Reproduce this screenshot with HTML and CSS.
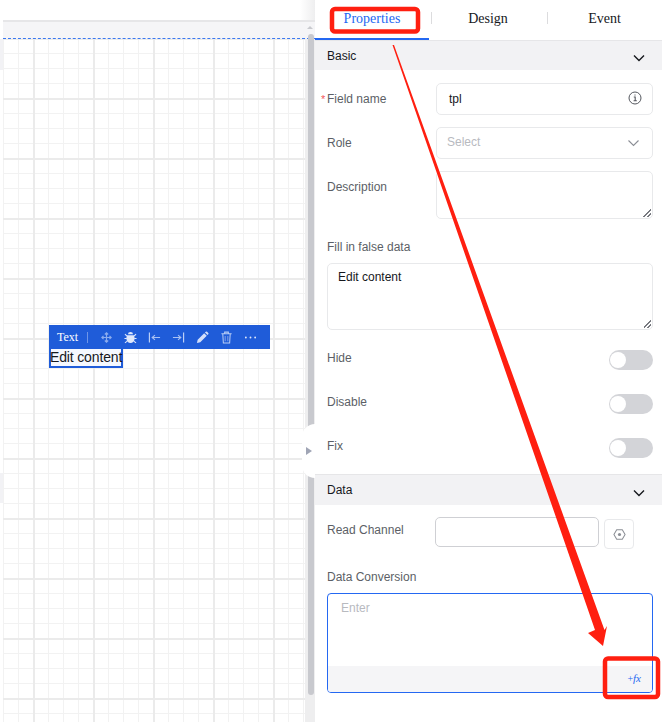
FILE: index.html
```html
<!DOCTYPE html>
<html lang="en">
<head>
<meta charset="utf-8">
<title>Form designer</title>
<link rel="stylesheet" href="styles.css">
</head>
<body>
<div class="app">
  <section class="stage">
    <div class="stage-top"></div>
    <div class="ruler"></div>
    <div class="board">
      <div class="edge"><div class="edge-a"></div><div class="edge-b"></div></div>
      <div class="grid">
        <div class="toolbar">
          <span class="tool-name">Text</span>
          <span class="tool-sep"></span>
          <svg class="ti" viewBox="0 0 14 14"><path d="M7 2v10M2 7h10M5.200 3.800 7 2l1.800 1.800M5.200 10.200 7 12l1.800-1.800M3.800 5.200 2 7l1.800 1.800M10.200 5.200 12 7l-1.800 1.800" fill="none" stroke="#8cacee" stroke-width="1.300"/></svg>
          <svg class="ti" viewBox="0 0 14 14"><path d="M4.300 3.600a2.700 2.400 0 0 1 5.400 0zM3.600 4.600h6.800c.8 1 1 2 1 3.400 0 3-2 5-4.400 5s-4.400-2-4.400-5c0-1.400.2-2.400 1-3.400z" fill="#dfe8fb"/><path d="M1 3.500 3.500 5.500M13 3.500l-2.500 2M.5 8h2.500M11 8h2.500M1 12.800l2.500-2M13 12.800l-2.500-2" stroke="#dfe8fb" stroke-width="1.100"/></svg>
          <svg class="ti" viewBox="0 0 14 14"><path d="M1.500 1.500v11" fill="none" stroke="#c5d5f7" stroke-width="1.200"/><path d="M13 7H4.500M7.500 4.500 4.500 7l3 2.500" fill="none" stroke="#a9c1f3" stroke-width="1.200"/></svg>
          <svg class="ti" viewBox="0 0 14 14"><path d="M12.500 1.500v11" fill="none" stroke="#c5d5f7" stroke-width="1.200"/><path d="M1 7h8.500M6.500 4.500l3 2.500-3 2.500" fill="none" stroke="#a9c1f3" stroke-width="1.200"/></svg>
          <svg class="ti" viewBox="0 0 14 14"><path d="M1 13l.8-3.600 7-7 2.800 2.800-7 7zM9.600 1.600l.9-.8a1 1 0 0 1 1.400 0l1.300 1.300a1 1 0 0 1 0 1.400l-.8.900z" fill="#d3dffa"/></svg>
          <svg class="ti" viewBox="0 0 14 14"><path d="M1.500 3h11M5 3V1.200h4V3M3 3l.6 10h6.800L11 3" fill="none" stroke="#b9cdf5" stroke-width="1.100"/><path d="M5.600 5.500v5.500M8.400 5.500v5.500" fill="none" stroke="#7f9fe8" stroke-width="1.100"/></svg>
          <svg class="ti" viewBox="0 0 14 14"><circle cx="2" cy="7" r="1" fill="#dfe8fb"/><circle cx="7" cy="7" r="1" fill="#dfe8fb"/><circle cx="12" cy="7" r="1" fill="#dfe8fb"/></svg>
        </div>
        <div class="selected">Edit content</div>
      </div>
      <div class="track"><div class="thumb"></div></div>
    </div>
    <div class="track-arrow"></div>
    <div class="handle"><span class="handle-arrow"></span></div>
  </section>

  <aside class="panel">
    <nav class="tabs">
      <div class="tab tab-active">Properties</div>
      <div class="tab tab-design">Design</div>
      <div class="tab tab-event">Event</div>
    </nav>

    <header class="section-head">
      <span>Basic</span>
      <svg class="chev" viewBox="0 0 12 8"><path d="M1 1.500 6 6.500l5-5" fill="none" stroke="#16181d" stroke-width="1.400"/></svg>
    </header>
    <div class="section-body">
      <div class="row">
        <label class="label"><span class="req">*</span>Field name</label>
        <div class="input input-value"><span>tpl</span>
          <svg class="info" viewBox="0 0 14 14"><circle cx="7" cy="7" r="6" fill="none" stroke="#55585f" stroke-width="1"/><path d="M5.800 6h1.400v3.800M5.600 9.800h3.200M7 3.400v1.200" fill="none" stroke="#55585f" stroke-width="1.100"/></svg>
        </div>
      </div>
      <div class="row">
        <label class="label">Role</label>
        <div class="input input-select"><span class="placeholder">Select</span>
          <svg class="select-chev" viewBox="0 0 12 8"><path d="M1 1.500 6 6.500l5-5" fill="none" stroke="#8b8e95" stroke-width="1.100"/></svg>
        </div>
      </div>
      <div class="row">
        <label class="label">Description</label>
        <div class="area area-short"><span class="grip"></span></div>
      </div>
      <div class="stack">
        <label class="label-top">Fill in false data</label>
        <div class="area area-tall"><span class="area-text">Edit content</span><span class="grip"></span></div>
      </div>
      <div class="switches">
        <div class="switch-row"><span class="label-sw">Hide</span><span class="switch"></span></div>
        <div class="switch-row"><span class="label-sw">Disable</span><span class="switch"></span></div>
        <div class="switch-row"><span class="label-sw">Fix</span><span class="switch"></span></div>
      </div>
    </div>

    <header class="section-head section-data">
      <span>Data</span>
      <svg class="chev" viewBox="0 0 12 8"><path d="M1 1.500 6 6.500l5-5" fill="none" stroke="#16181d" stroke-width="1.400"/></svg>
    </header>
    <div class="data-body">
      <div class="channel">
        <label class="label label-channel">Read Channel</label>
        <div class="channel-input"></div>
        <div class="channel-btn">
          <svg class="hex" viewBox="0 0 14 14"><path d="M4 1.800h6L13 7l-3 5.200H4L1 7z" fill="none" stroke="#8b8e95" stroke-width="1.100"/><circle cx="7" cy="7" r="1.700" fill="#8b8e95"/></svg>
        </div>
      </div>
      <label class="label-top label-conv">Data Conversion</label>
      <div class="formula">
        <div class="formula-text">Enter</div>
        <div class="formula-foot"><span class="fx">+<i>fx</i></span></div>
      </div>
    </div>
  </aside>

  <svg class="markup" viewBox="0 0 662 722" aria-hidden="true">
    <rect x="332" y="9" width="86" height="22.500" rx="3" fill="none" stroke="#ff1f10" stroke-width="4.500"/>
    <rect x="605" y="658.500" width="53" height="38.500" rx="3" fill="none" stroke="#ff1f10" stroke-width="4.500"/>
    <path d="M392.500 45 394 45 604.500 630 607 626 603 646 588 633 595 630Z" fill="#ff1f10"/>
  </svg>
</div>
</body>
</html>
```

FILE: styles.css
```css
* { box-sizing: border-box; }
html, body { margin: 0; padding: 0; background: #fff; }
body { width: 662px; height: 722px; overflow: hidden; font-family: "Liberation Sans", Arial, sans-serif; font-size: 12px; }
.app { position: relative; display: flex; width: 662px; height: 722px; overflow: hidden; }

/* canvas side */
.stage { position: relative; display: flex; flex-direction: column; width: 315px; height: 722px; flex: none; }
.stage-top { height: 20px; background: linear-gradient(90deg, #fff 300px, #eeeeef 315px); flex: none; }
.ruler { height: 19px; margin-left: 3px; flex: none; background: #f5f5f7; border-top: 2px solid #e6e6e8; border-bottom: 1px dashed #3b78f0; }
.board { display: flex; flex: 1; min-height: 0; }
.edge { width: 3px; flex: none; }
.edge-a { height: 31px; background: #f2f2f5; }
.edge-b { height: 30px; margin-top: 403px; background: #f2f2f5; }
.grid {
  position: relative;
  width: 302px;
  flex: none;
  background-color: #fff;
  background-image:
    linear-gradient(90deg, #ebebeb 2px, transparent 2px),
    linear-gradient(180deg, #ebebeb 2px, transparent 2px),
    linear-gradient(90deg, #f2f2f2 1px, transparent 1px),
    linear-gradient(180deg, #f2f2f2 1px, transparent 1px);
  background-size: 60px 60px, 60px 60px, 15px 15px, 15px 15px;
  background-position: 30px 0, 0 -1px, 0 0, 0 -1px;
}
.track { position: relative; flex: 1; background: #eeeeef; }
.thumb { position: absolute; left: 3px; top: -5px; width: 6px; height: 661px; border-radius: 3px; background: #c8c9ce; }
.track-arrow { position: absolute; left: 307px; top: 26px; width: 0; height: 0; border-left: 3px solid transparent; border-right: 3px solid transparent; border-bottom: 3px solid #c8c9ce; }

.toolbar { position: absolute; left: 46px; top: 286px; display: flex; align-items: center; width: 221px; height: 24px; padding-left: 8px; background: #1f5cd9; }
.tool-name { width: 22px; font-family: "Liberation Serif", serif; font-size: 12px; color: #fff; white-space: nowrap; }
.tool-sep { width: 1px; height: 11px; margin: 0 12px 0 8px; background: #6f96e8; }
.ti { width: 13px; height: 13px; margin-right: 11px; flex: none; }
.selected { position: absolute; left: 46px; top: 310px; width: 74px; height: 19px; border: 2px solid #1f5cd9; border-top-width: 0; background: #f5f8ff; color: #16181d; font-size: 14px; line-height: 17px; letter-spacing: -0.15px; text-indent: -1px; white-space: nowrap; }

.handle { position: absolute; left: 302px; top: 424px; width: 13px; height: 54px; border-radius: 14px 0 0 14px; background: #fff; display: flex; align-items: center; justify-content: flex-start; }
.handle-arrow { width: 0; height: 0; margin-left: 4px; border-top: 4px solid transparent; border-bottom: 4px solid transparent; border-left: 6px solid #a0a5b5; }

/* panel side */
.panel { width: 347px; height: 722px; flex: none; display: flex; flex-direction: column; background: #fff; }
.tabs { display: flex; height: 41px; flex: none; border-bottom: 1px solid #e6e6e8; }
.tab { position: relative; height: 40px; font-family: "Liberation Serif", serif; font-size: 14px; line-height: 37px; text-align: center; color: #16181d; }
.tab-active { width: 114px; color: #2468f2; }
.tab-active::after { content: ""; position: absolute; left: 0; bottom: 0; width: 114px; height: 2px; background: #2468f2; }
.tab-design { width: 118px; }
.tab-event { width: 115px; }
.tab-design::before, .tab-event::before { content: ""; position: absolute; top: 12px; width: 1px; height: 12px; background: #dcdcde; }
.tab-design::before { left: 2px; }
.tab-event::before { left: 0; }

.section-head { display: flex; align-items: center; justify-content: space-between; height: 29px; padding: 0 17px 0 12px; flex: none; background: #f2f2f4; color: #16181d; font-size: 12px; line-height: 29px; }
.section-data { height: 31px; border-top: 1px solid #e6e6e8; line-height: 29px; }
.section-head span { position: relative; top: 1px; }
.section-data span { top: 0; }
.chev { width: 12px; height: 8px; margin-top: 5px; }

.section-body { padding: 13px 9px 16px 12px; flex: none; }
.row { display: flex; margin-bottom: 12px; }
.label { position: relative; width: 109px; flex: none; color: #5c5f66; line-height: 32px; }
.req { position: absolute; left: -6px; top: 0; color: #f4555a; font-size: 11px; }
.input { display: flex; align-items: center; justify-content: space-between; width: 217px; height: 32px; border: 1px solid #e8e9eb; border-radius: 5px; background: #fff; }
.input-value { padding: 0 10px 0 12px; color: #16181d; }
.input-select { padding: 0 12px 0 10px; }
.placeholder { color: #b8babf; position: relative; top: -1px; }
.info { width: 14px; height: 14px; position: relative; top: -1px; }
.select-chev { width: 13px; height: 8px; }
.area { position: relative; border: 1px solid #e8e9eb; border-radius: 5px; background: #fff; }
.area-short { width: 217px; height: 48px; }
.area-tall { width: 326px; height: 67px; padding: 5px 10px; color: #16181d; line-height: 16px; }
.area-text { display: block; }
.grip { position: absolute; right: 1px; bottom: 1px; width: 8px; height: 8px; background: linear-gradient(135deg, transparent 50%, #77797f 50%, #77797f 58%, transparent 58%, transparent 74%, #77797f 74%, #77797f 82%, transparent 82%); }
.stack { margin-top: 19px; }
.label-top { display: block; color: #5c5f66; line-height: 18px; }
.stack .area { margin-top: 7px; }
.switches { display: flex; flex-direction: column; gap: 24px; margin-top: 20px; }
.switch-row { display: flex; justify-content: space-between; height: 20px; }
.label-sw { color: #5c5f66; line-height: 16px; }
.switch { position: relative; width: 44px; height: 20px; border-radius: 10px; background: #d3d4d8; }
.switch::after { content: ""; position: absolute; left: 1px; top: 2px; width: 16px; height: 16px; border-radius: 50%; background: #fff; }

.data-body { padding: 12px 9px 0 12px; }
.channel { display: flex; align-items: flex-start; }
.label-channel { width: 108px; line-height: 26px; }
.channel-input { width: 164px; height: 30px; border: 1px solid #cfd0d4; border-radius: 5px; }
.channel-btn { display: flex; align-items: center; justify-content: center; width: 30px; height: 30px; margin: 2px 0 0 5px; border: 1px solid #e8e9eb; border-radius: 4px; }
.hex { width: 13px; height: 13px; }
.label-conv { margin-top: 19px; }
.formula { width: 326px; height: 100px; margin-top: 7px; border: 1px solid #2468f2; border-radius: 4px; display: flex; flex-direction: column; justify-content: space-between; overflow: hidden; }
.formula-text { padding: 7px 13px; color: #b8babf; line-height: 14px; }
.formula-foot { height: 26px; background: #f5f5f7; text-align: right; padding-right: 11px; color: #2468f2; line-height: 25px; font-size: 10px; }
.fx { font-family: "Liberation Serif", serif; }
.fx i { font-style: italic; font-size: 11px; }

.markup { position: absolute; left: 0; top: 0; width: 662px; height: 722px; pointer-events: none; }
```
